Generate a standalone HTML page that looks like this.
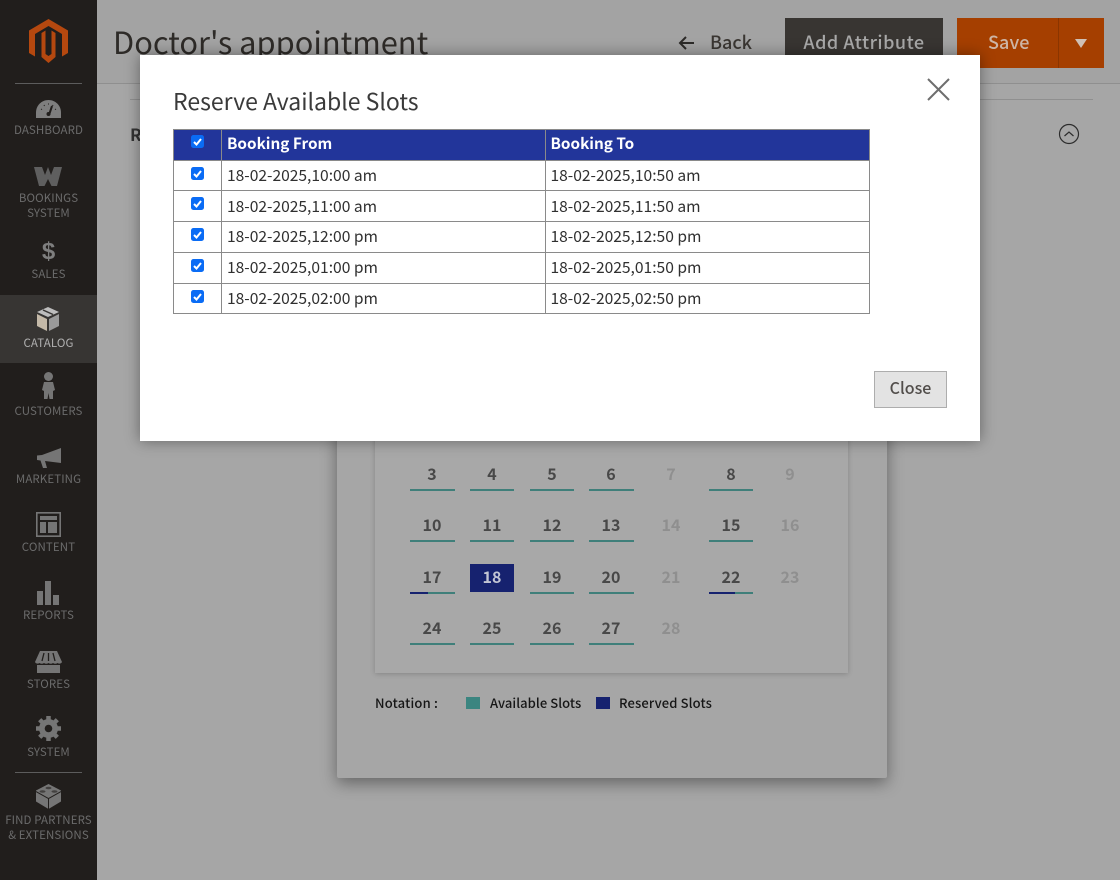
<!DOCTYPE html>
<html><head><meta charset="utf-8"><style>
*{box-sizing:border-box}
html,body{margin:0;padding:0}
body{width:1120px;height:880px;position:relative;overflow:hidden;background:#a6a6a6;font-family:"Noto Sans CJK SC","Liberation Sans",sans-serif;color:#303030}
.a{position:absolute;white-space:nowrap}
#side{left:0;top:0;width:97px;height:880px;background:#211e1c}
.lb{position:absolute;left:0;width:97px;text-align:center;color:#6b6b6b;font-size:11.5px;line-height:15px;letter-spacing:.1px;white-space:nowrap}
.ic{position:absolute}
.n{position:absolute;width:44px;text-align:center;font-size:16px;line-height:20px;font-weight:700;color:#484848}
.n.d{color:#8f8f8f}
.u{position:absolute;width:45px;height:2px;background:#3f7f7a}
.cell{position:absolute;font-size:15.6px;line-height:20px;color:#303030;white-space:nowrap}
.hd{font-size:15.3px;color:#fff;font-weight:700}
.hl{position:absolute;height:1px;background:#8a8a8a;left:173px;width:697px}
.vl{position:absolute;width:1px;background:#8a8a8a;top:129px;height:185px}
.cb{position:absolute;left:191px;width:13px;height:13px;background:#0a6cf5;border-radius:2.5px}
.cb svg{display:block}
.lg{font-size:13px;line-height:18px;font-weight:500;color:#161616}
</style></head><body>
<div class="a" style="left:97px;top:0;width:1023px;height:84px;background:#a3a3a3;border-bottom:1px solid #8f8f8f"></div>
<div class="a" style="left:113px;top:19px;font-size:30.8px;line-height:44px;color:#2e2b28">Doctor's appointment</div>
<svg class="a" style="left:678px;top:35px" width="18" height="16" viewBox="0 0 18 16"><path d="M16 8H2M8 2L2 8l6 6" fill="none" stroke="#2c2a28" stroke-width="2"/></svg>
<div class="a" style="left:710px;top:30px;font-size:18px;line-height:24px;font-weight:500;color:#3a3632">Back</div>
<div class="a" style="left:785px;top:18px;width:158px;height:50px;background:#383532;color:#a9a9a9;font-size:18px;line-height:49px;text-align:center;font-weight:500;letter-spacing:.5px">Add Attribute</div>
<div class="a" style="left:957px;top:18px;width:147px;height:50px;background:#a53f00;color:#cdb5a5;font-size:18px;line-height:49px;font-weight:500;letter-spacing:.1px;padding-left:31px">Save</div>
<div class="a" style="left:1058px;top:18px;width:1px;height:50px;background:#8a3500"></div>
<svg class="a" style="left:1074px;top:38px" width="14" height="11"><path d="M1 1h12L7 10z" fill="#cfc0b5"/></svg>
<div class="a" style="left:130px;top:99px;width:963px;height:1px;background:#8f8f8f"></div>
<div class="a" style="left:130px;top:122px;font-size:17px;line-height:24px;font-weight:700;color:#333">R</div>
<svg class="a" style="left:1058px;top:123px" width="22" height="22"><circle cx="11" cy="11" r="9.5" fill="none" stroke="#2c2c2c" stroke-width="1.2"/><path d="M6.5 13L11 9l4.500 4" fill="none" stroke="#2c2c2c" stroke-width="1.2"/></svg>

<!-- calendar -->
<div class="a" style="left:337px;top:300px;width:550px;height:478px;background:#a6a6a6;border-radius:2px;box-shadow:0 5px 16px rgba(0,0,0,.4)"></div>
<div class="a" style="left:375px;top:300px;width:473px;height:373px;background:#a8a8a8;box-shadow:0 1px 5px rgba(0,0,0,.2)"></div>

<div class="n" style="left:410px;top:463px">3</div><div class="n" style="left:470px;top:463px">4</div><div class="n" style="left:530px;top:463px">5</div><div class="n" style="left:589px;top:463px">6</div><div class="n d" style="left:649px;top:463px">7</div><div class="n" style="left:709px;top:463px">8</div><div class="n d" style="left:768px;top:463px">9</div>
<div class="n" style="left:410px;top:514px">10</div><div class="n" style="left:470px;top:514px">11</div><div class="n" style="left:530px;top:514px">12</div><div class="n" style="left:589px;top:514px">13</div><div class="n d" style="left:649px;top:514px">14</div><div class="n" style="left:709px;top:514px">15</div><div class="n d" style="left:768px;top:514px">16</div>
<div class="a" style="left:470px;top:564px;width:44px;height:28px;background:#16226f"></div>
<div class="n" style="left:410px;top:566px">17</div><div class="n" style="left:470px;top:566px;color:#c2c5d4">18</div><div class="n" style="left:530px;top:566px">19</div><div class="n" style="left:589px;top:566px">20</div><div class="n d" style="left:649px;top:566px">21</div><div class="n" style="left:709px;top:566px">22</div><div class="n d" style="left:768px;top:566px">23</div>
<div class="n" style="left:410px;top:617px">24</div><div class="n" style="left:470px;top:617px">25</div><div class="n" style="left:530px;top:617px">26</div><div class="n" style="left:589px;top:617px">27</div><div class="n d" style="left:649px;top:617px">28</div>

<div class="u" style="left:410px;top:489px"></div><div class="u" style="left:470px;top:489px;width:44px"></div><div class="u" style="left:530px;top:489px;width:44px"></div><div class="u" style="left:589px;top:489px"></div><div class="u" style="left:709px;top:489px;width:44px"></div>
<div class="u" style="left:410px;top:540px"></div><div class="u" style="left:470px;top:540px;width:44px"></div><div class="u" style="left:530px;top:540px;width:44px"></div><div class="u" style="left:589px;top:540px"></div><div class="u" style="left:709px;top:540px;width:44px"></div>
<div class="u" style="left:410px;top:592px"></div><div class="u" style="left:410px;top:592px;width:18px;background:#16226f"></div><div class="u" style="left:530px;top:592px;width:44px"></div><div class="u" style="left:589px;top:592px"></div><div class="u" style="left:709px;top:592px;width:44px"></div><div class="u" style="left:709px;top:592px;width:26px;background:#16226f"></div>
<div class="u" style="left:410px;top:643px"></div><div class="u" style="left:470px;top:643px;width:44px"></div><div class="u" style="left:530px;top:643px;width:44px"></div><div class="u" style="left:589px;top:643px"></div>

<div class="a lg" style="left:375px;top:694px;letter-spacing:.2px">Notation :</div>
<div class="a" style="left:466px;top:697px;width:14px;height:12px;background:#3b8580"></div>
<div class="a lg" style="left:490px;top:694px;letter-spacing:.06px">Available Slots</div>
<div class="a" style="left:596px;top:697px;width:14px;height:12px;background:#16226f"></div>
<div class="a lg" style="left:619px;top:694px;letter-spacing:.13px">Reserved Slots</div>

<!-- sidebar -->
<div id="side" class="a"></div>
<svg class="ic" style="left:28px;top:19px" width="41" height="45" viewBox="0 0 41 45"><path fill="#b5480f" d="M20.500 0L40 11.500V34l-6 3.500V15L20.500 7 7 15v22.500L1 34V11.500z"/><path fill="#b5480f" d="M13.500 14l4-2.500V35l3 2 3-2V11.500l4 2.500v24l-7 6-7-6z"/></svg>
<div class="a" style="left:15px;top:83px;width:67px;height:1px;background:#5c5c5c"></div>
<svg class="ic" style="left:36px;top:100px" width="25" height="19" viewBox="0 0 25 19"><path fill="#7e7e7e" d="M12.500 0C5.600 0 0 5.600 0 12.500V18h25v-5.500C25 5.600 19.400 0 12.500 0z"/><path d="M16 6l-3 9" stroke="#211e1c" stroke-width="2"/><circle cx="12.500" cy="14" r="2" fill="#211e1c"/><path d="M5 9l1 .6M8 5l.5 1M12.500 3.500v1M17 5l-.5 1M20 9l-1 .6" stroke="#211e1c" stroke-width="1"/></svg>
<div class="lb" style="top:123px">DASHBOARD</div>
<svg class="ic" style="left:34px;top:167px" width="28" height="19" viewBox="0 0 28 19"><path fill="#5f5f5f" d="M0 0h8l3 8 3-8 3 8 3-8h8l-5 19h-5.500L14 12l-3.500 7H5z"/></svg>
<div class="lb" style="top:191px">BOOKINGS</div><div class="lb" style="top:206px">SYSTEM</div>
<div class="ic" style="left:0;top:238px;width:97px;text-align:center;font-size:24px;line-height:28px;font-weight:700;color:#7e7e7e;font-family:'Liberation Sans',sans-serif">$</div>
<div class="lb" style="top:267px">SALES</div>

<div class="a" style="left:0;top:295px;width:97px;height:68px;background:#373533"></div>
<svg class="ic" style="left:37px;top:307px" width="22" height="24" viewBox="0 0 22 24"><path fill="#bdbdbd" d="M11 0L0 5l11 5 11-5z"/><path fill="#c4b9a8" d="M0 7v12l10 5V12z"/><path fill="#9a9a9a" d="M22 7v12l-10 5V12z"/><path d="M6 3l10 4.500" stroke="#373533" stroke-width="1.500"/></svg>
<div class="lb" style="top:336px;color:#b0b0b0">CATALOG</div>
<svg class="ic" style="left:42px;top:372px" width="13" height="27" viewBox="0 0 13 27"><circle cx="6.500" cy="4.500" r="4.500" fill="#757575"/><path fill="#757575" d="M2 10h9l2 8-2 1v8H7.500l-1-6-1 6H2v-8l-2-1z"/></svg>
<div class="lb" style="top:404px">CUSTOMERS</div>
<svg class="ic" style="left:37px;top:448px" width="24" height="21" viewBox="0 0 24 21"><path fill="#757575" d="M24 0v15L8 13l2 7H6L3.500 12.500 0 12V7.500l5-.5z"/></svg>
<div class="lb" style="top:472px">MARKETING</div>
<svg class="ic" style="left:36px;top:512px" width="25" height="25" viewBox="0 0 25 25"><path fill="none" stroke="#757575" stroke-width="1.600" d="M.8.800h23.400v23.400H.8z"/><path fill="#757575" d="M4 4h17v4H4zM4 10h6v11H4zM12 10h9v11h-9z"/></svg>
<div class="lb" style="top:540px">CONTENT</div>
<svg class="ic" style="left:37px;top:581px" width="22" height="24" viewBox="0 0 22 24"><path fill="#757575" d="M0 10h6v14H0zM8 0h6v24H8zM16 14h6v10h-6z"/></svg>
<div class="lb" style="top:608px">REPORTS</div>
<svg class="ic" style="left:35px;top:651px" width="27" height="22" viewBox="0 0 27 22"><path fill="#757575" d="M5 0h17l5 11c-1 2-3 2-4.500 1-1.500 1-3 1-4.500 0-1.500 1-3 1-4.500 0-1.500 1-3 1-4.500 0-1.500 1-3 1-4.500 0C3 13 1 13 0 11zM2 14h23v8H2z"/><path d="M9 2l-2 8M13.500 2v8M18 2l2 8" stroke="#211e1c" stroke-width="1.300"/></svg>
<div class="lb" style="top:677px">STORES</div>
<svg class="ic" style="left:36px;top:716px" width="25" height="25" viewBox="0 0 25 25"><circle cx="12.500" cy="12.500" r="9.500" fill="#757575"/><path stroke="#757575" stroke-width="4.500" d="M12.500 0v25M0 12.500h25M3.700 3.700l17.600 17.600M21.300 3.700L3.700 21.300"/><circle cx="12.500" cy="12.500" r="3.800" fill="#211e1c"/></svg>
<div class="lb" style="top:745px">SYSTEM</div>
<div class="a" style="left:15px;top:772px;width:67px;height:1px;background:#5c5c5c"></div>
<svg class="ic" style="left:36px;top:784px" width="25" height="25" viewBox="0 0 25 25"><path fill="#757575" d="M12.500 0L25 6.500v11L12.500 25 0 17.500v-11z"/><path d="M0 7.500l12.500 7 12.500-7M12.500 14.500V25" stroke="#211e1c" stroke-width="1" fill="none"/><ellipse cx="12.500" cy="4" rx="3" ry="1.300" fill="#211e1c" opacity=".6"/><ellipse cx="6.500" cy="7.500" rx="3" ry="1.300" fill="#211e1c" opacity=".6"/><ellipse cx="18.500" cy="7.500" rx="3" ry="1.300" fill="#211e1c" opacity=".6"/></svg>
<div class="lb" style="top:813px">FIND PARTNERS</div><div class="lb" style="top:828px">&amp; EXTENSIONS</div>

<!-- modal -->
<div class="a" style="left:140px;top:55px;width:840px;height:386px;background:#fff;box-shadow:0 0 14px rgba(0,0,0,.4)"></div>
<div class="a" style="left:173px;top:84px;font-size:23px;line-height:32px;color:#3a3a3a">Reserve Available Slots</div>
<svg class="a" style="left:927px;top:78px" width="23" height="23"><path d="M1 1l21 21M22 1L1 22" stroke="#6e6e6e" stroke-width="2"/></svg>

<div class="a" style="left:173px;top:129px;width:697px;height:32px;background:#22359a"></div>
<div class="hl" style="top:129px"></div><div class="hl" style="top:160px"></div><div class="hl" style="top:190px"></div><div class="hl" style="top:221px"></div><div class="hl" style="top:252px"></div><div class="hl" style="top:283px"></div><div class="hl" style="top:313px"></div>
<div class="vl" style="left:173px"></div><div class="vl" style="left:221px"></div><div class="vl" style="left:545px"></div><div class="vl" style="left:869px"></div>

<div class="cell hd" style="left:227px;top:133px">Booking From</div>
<div class="cell hd" style="left:550.5px;top:133px">Booking To</div>
<div class="cell" style="left:227px;top:165px">18-02-2025,10:00 am</div><div class="cell" style="left:550.5px;top:165px">18-02-2025,10:50 am</div>
<div class="cell" style="left:227px;top:196px">18-02-2025,11:00 am</div><div class="cell" style="left:550.5px;top:196px">18-02-2025,11:50 am</div>
<div class="cell" style="left:227px;top:226px">18-02-2025,12:00 pm</div><div class="cell" style="left:550.5px;top:226px">18-02-2025,12:50 pm</div>
<div class="cell" style="left:227px;top:257px">18-02-2025,01:00 pm</div><div class="cell" style="left:550.5px;top:257px">18-02-2025,01:50 pm</div>
<div class="cell" style="left:227px;top:288px">18-02-2025,02:00 pm</div><div class="cell" style="left:550.5px;top:288px">18-02-2025,02:50 pm</div>

<div class="cb" style="top:135px"><svg width="13" height="13"><path d="M3 7l2.500 2.500L10 4" fill="none" stroke="#fff" stroke-width="2"/></svg></div>
<div class="cb" style="top:167px"><svg width="13" height="13"><path d="M3 7l2.500 2.500L10 4" fill="none" stroke="#fff" stroke-width="2"/></svg></div>
<div class="cb" style="top:197px"><svg width="13" height="13"><path d="M3 7l2.500 2.500L10 4" fill="none" stroke="#fff" stroke-width="2"/></svg></div>
<div class="cb" style="top:228px"><svg width="13" height="13"><path d="M3 7l2.500 2.500L10 4" fill="none" stroke="#fff" stroke-width="2"/></svg></div>
<div class="cb" style="top:259px"><svg width="13" height="13"><path d="M3 7l2.500 2.500L10 4" fill="none" stroke="#fff" stroke-width="2"/></svg></div>
<div class="cb" style="top:290px"><svg width="13" height="13"><path d="M3 7l2.500 2.500L10 4" fill="none" stroke="#fff" stroke-width="2"/></svg></div>

<div class="a" style="left:874px;top:371px;width:73px;height:37px;background:#e3e3e3;border:1px solid #adadad;text-align:center;font-size:16px;line-height:30px;font-weight:500;color:#514d4a">Close</div>
</body></html>
